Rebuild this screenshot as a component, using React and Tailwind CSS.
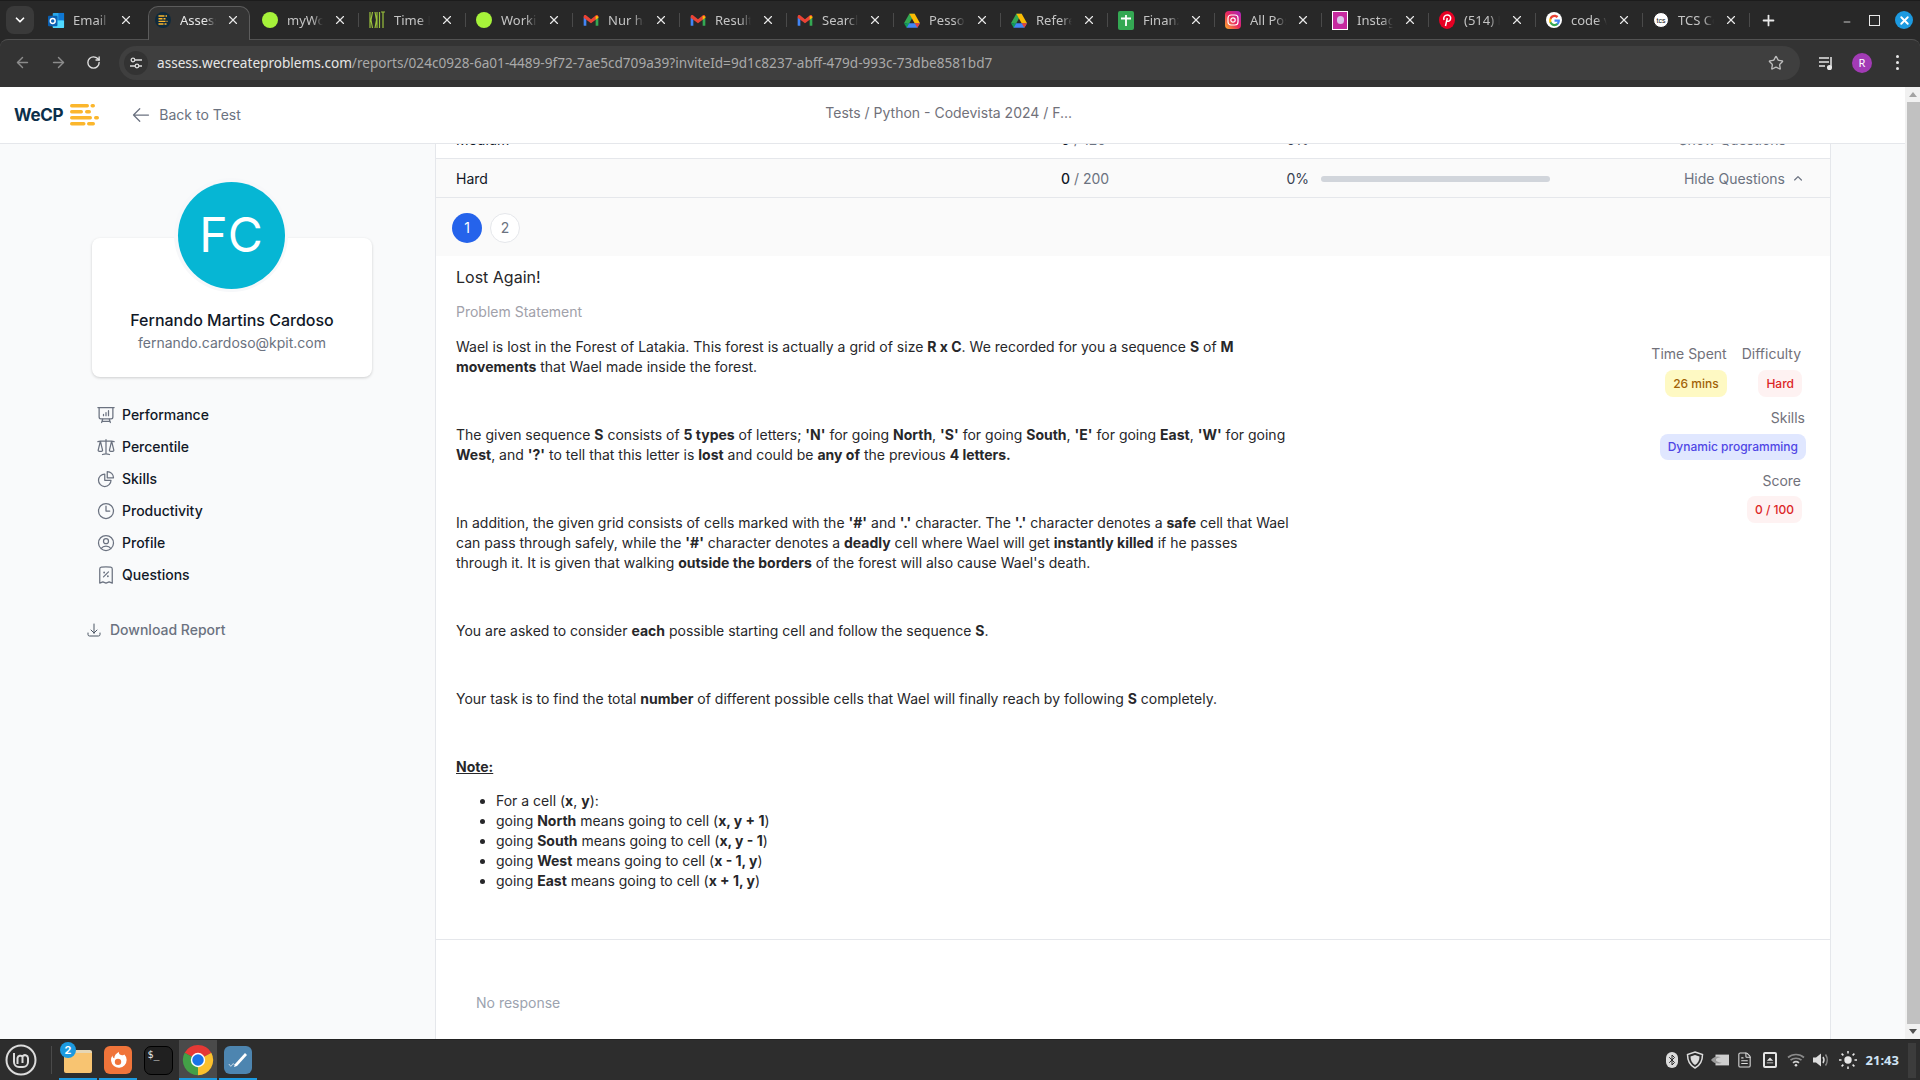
import React from "react";
import { ArrowLeft, ArrowRight, RotateCw, Star, X, Plus, Minus, ChevronDown, Bluetooth, FileText } from "lucide-react";
import { HiOutlinePresentationChartBar, HiOutlineScale, HiOutlineChartPie, HiOutlineClock, HiOutlineUserCircle, HiOutlineReceiptPercent, HiOutlineArrowDownTray, HiOutlineArrowLeft, HiMiniChevronUp } from "react-icons/hi2";

const Gmail = () => (
  <svg viewBox="0 0 24 18" className="w-[16px] h-[13px]">
    <path d="M1 17V4l4 3v10H2a1 1 0 0 1-1-1z" fill="#4285f4" />
    <path d="M23 17V4l-4 3v10h3a1 1 0 0 0 1-1z" fill="#34a853" />
    <path d="M5 8 1 5V3c0-2 2-3 4-1.500L12 7l7-5.500C21 0 23 1 23 3v2l-4 3-7 5z" fill="#ea4335" />
    <path d="M19 2 23 3v2l-4 3z" fill="#fbbc04" />
  </svg>
);
const Drive = () => (
  <svg viewBox="0 0 24 22" className="w-[16px] h-[15px]">
    <path d="M8 1h8l-8 14H0z" fill="#34a853" />
    <path d="M8 1h8l8 14h-8z" fill="#fbbc04" />
    <path d="M4 15h20l-4 7H4z" fill="#4285f4" />
    <path d="M0 15h8l-4 7z" fill="#0f9d58" />
    <path d="M16 15h8l-4 7z" fill="#ea4335" />
  </svg>
);
const Outlook = () => (
  <svg viewBox="0 0 18 18" className="w-[17px] h-[17px]">
    <rect x="5" y="1" width="12" height="16" rx="1" fill="#28a8ea" />
    <rect x="11" y="1" width="6" height="8" fill="#0f78d4" />
    <rect x="5" y="9" width="12" height="8" rx="1" fill="#50d9ff" />
    <rect x="0" y="4" width="10" height="11" rx="1" fill="#0a5fb0" />
    <circle cx="5" cy="9.500" r="2.600" fill="none" stroke="#fff" strokeWidth="1.500" />
  </svg>
);
const WeCPFav = () => (
  <svg viewBox="0 0 16 16" className="w-[16px] h-[16px]">
    <circle cx="8" cy="8" r="8" fill="#0f2a3d" />
    <path d="M3.500 4h6M10.500 4h1.500M3.500 6.700h4M8.500 6.700h2M3.500 9.400h7M11.500 9.400h1M3.500 12h5M9.500 12h2" stroke="#fbb62c" strokeWidth="1.400" />
  </svg>
);
const GreenDot = () => <div className="w-[16px] h-[16px] rounded-full bg-[#a6f23a]" />;
const Kpit = () => (
  <svg viewBox="0 0 16 18" className="w-[16px] h-[18px]">
    <path d="M1 1v16M3.500 1 2 9l1.500 8M6 1l1.500 8L6 17M8 1v16M10.500 1v16M12 1h4M14 1v16" stroke="#9ac23c" strokeWidth="1.200" fill="none" />
  </svg>
);
const Sheets = () => (
  <div className="w-[16px] h-[19px] rounded-[2px] bg-[#34a853] flex items-center justify-center">
    <svg viewBox="0 0 16 19" className="w-[16px] h-[19px]"><path d="M8 4v11M3 7.500h10" stroke="#fff" strokeWidth="1.800" /></svg>
  </div>
);
const Insta = () => (
  <svg viewBox="0 0 16 18" className="w-[16px] h-[18px]">
    <defs>
      <linearGradient id="ig" x1="0" y1="1" x2="1" y2="0">
        <stop offset="0" stopColor="#fdb12a" />
        <stop offset=".5" stopColor="#e8265f" />
        <stop offset="1" stopColor="#a427c4" />
      </linearGradient>
    </defs>
    <rect width="16" height="18" rx="4" fill="url(#ig)" />
    <rect x="3" y="4" width="10" height="10" rx="3" fill="none" stroke="#fff" strokeWidth="1.200" />
    <circle cx="8" cy="9" r="2.200" fill="none" stroke="#fff" strokeWidth="1.200" />
  </svg>
);
const InstaPink = () => (
  <div className="w-[16px] h-[19px] bg-white flex items-center justify-center">
    <div className="w-[14px] h-[17px] bg-[#c62a9f] flex items-center justify-center">
      <div className="w-[7px] h-[8px] rounded-full bg-[#d9c5e8]" />
    </div>
  </div>
);
const Pinterest = () => (
  <svg viewBox="0 0 16 18" className="w-[16px] h-[18px]">
    <ellipse cx="8" cy="9" rx="8" ry="9" fill="#e60023" />
    <path d="M6.500 15 8.300 7M5 9C4 6 6 4 8.300 4c2.400 0 3.700 1.700 3.300 3.900-.4 2-2.600 3.200-3.800 1.800" fill="none" stroke="#fff" strokeWidth="1.500" />
  </svg>
);
const Google = () => (
  <div className="w-[16px] h-[16px] rounded-full bg-white flex items-center justify-center">
    <svg viewBox="0 0 24 24" className="w-[13px] h-[13px]">
      <path d="M22 12.200c0-.7-.1-1.400-.2-2H12v3.900h5.600c-.2 1.300-1 2.400-2.100 3.100v2.600h3.400c2-1.800 3.100-4.500 3.100-7.600z" fill="#4285f4" />
      <path d="M12 22.500c2.800 0 5.200-.9 6.900-2.600l-3.400-2.600c-.9.600-2.100 1-3.500 1-2.700 0-5-1.800-5.800-4.300H3.100v2.700c1.700 3.500 5.100 5.800 8.900 5.800z" fill="#34a853" />
      <path d="M6.200 14c-.4-1.300-.4-2.700 0-4V7.300H3.100c-1.400 2.800-1.400 6.600 0 9.400z" fill="#fbbc04" />
      <path d="M12 5.700c1.500 0 2.900.5 4 1.500l3-3C17.100 2.500 14.700 1.500 12 1.500c-3.800 0-7.200 2.300-8.900 5.800L6.200 10C7 7.500 9.300 5.700 12 5.700z" fill="#ea4335" />
    </svg>
  </div>
);
const Tcs = () => (
  <div className="w-[16px] h-[16px] rounded-full bg-white border border-[#222] flex items-center justify-center text-[#111] text-[7px] leading-none" style={{ fontFamily: "Liberation Sans" }}>tcs</div>
);

const tabs = [
  ["Email - Fer", Outlook],
  ["Assess - W", WeCPFav],
  ["myWork - H", GreenDot],
  ["Time Log", Kpit],
  ["Working", GreenDot],
  ["Nur hab", Gmail],
  ["Resultado", Gmail],
  ["Search res", Gmail],
  ["Pessoal", Drive],
  ["Referenc", Drive],
  ["Finanzas", Sheets],
  ["All Posts", Insta],
  ["Instagram", InstaPink],
  ["(514) Pin", Pinterest],
  ["code vita", Google],
  ["TCS Code", Tcs],
];

function Tab({ label, Icon, index }) {
  const active = index === 1;
  const sep = index >= 2;
  return (
    <div className="relative w-[107px] h-[33px] shrink-0 flex items-center pb-[5px]">
      {active && <div className="absolute left-[3px] right-[2px] top-0 bottom-[-1px] rounded-t-[10px] bg-[#343434] border border-b-0 border-[#5c5c5c]" />}
      <div className="relative w-[36px] flex justify-center shrink-0">
        <Icon />
      </div>
      <div className={`relative w-[36px] -ml-[1px] overflow-hidden whitespace-nowrap text-[13px] leading-[18px] [mask-image:linear-gradient(to_right,black_70%,transparent)] ${active ? "text-[#e6e6e6]" : "text-[#c4c4c4]"}`}>
        {label}
      </div>
      <X className="relative ml-[10px] w-[14px] h-[14px] text-[#e8e8e8] shrink-0" strokeWidth={2} />
      {sep && <div className="absolute right-0 top-[7px] h-[14px] w-px bg-[#4a4a4a]" />}
    </div>
  );
}

const navItems = [
  ["Performance", HiOutlinePresentationChartBar],
  ["Percentile", HiOutlineScale],
  ["Skills", HiOutlineChartPie],
  ["Productivity", HiOutlineClock],
  ["Profile", HiOutlineUserCircle],
  ["Questions", HiOutlineReceiptPercent],
];

function Row({ name, score, pct, action, up, active }) {
  return (
    <div className={`flex items-center h-[39px] pl-5 pr-[24px] pt-[2px] border-b border-[#e5e7eb] text-sm shrink-0 ${active ? "bg-[#fafafa]" : "bg-white"}`}>
      <div className="w-[605px] text-[#111827]">{name}</div>
      <div className="w-[50px] whitespace-nowrap text-[#6b7280]"><span className="font-medium text-[#111827]">{score.split(" / ")[0]}</span> / {score.split(" / ")[1]}</div>
      <div className="w-[198px] text-right text-[#374151]">{pct}</div>
      <div className="ml-3 w-[229px] h-[6px] rounded-full bg-[#d1d5db]" />
      <div className="flex-1 flex justify-end items-center text-[#6b7280]">
        {action}
        {up ? <HiMiniChevronUp className="ml-[5px] w-4 h-4" /> : <span className="w-5" />}
      </div>
    </div>
  );
}

function Badge({ className, children }) {
  return <div className={`h-[27px] px-2 rounded-lg text-xs font-medium flex items-center whitespace-nowrap ${className}`}>{children}</div>;
}

function TaskItem({ children, running, active }) {
  return (
    <div className={`relative w-[38px] h-full shrink-0 flex items-center justify-center ${active ? "bg-[#4a4a4a]" : ""}`}>
      {children}
      {running && <div className="absolute left-0 right-0 bottom-0 h-[2px] bg-[#1c9ae0]" />}
    </div>
  );
}

function Taskbar() {
  return (
    <div className="h-[41px] shrink-0 bg-[#2d2d2d] flex items-center relative border-t border-[#222]">
      <div className="w-[51px] h-full flex items-center pl-[5px] shrink-0">
        <svg viewBox="0 0 32 32" className="w-[32px] h-[32px]" fill="none" stroke="#dcdcdc">
          <circle cx="16" cy="16" r="14.500" strokeWidth="2" />
          <path d="M9 9v9a5 5 0 0 0 5 5h4a5 5 0 0 0 5-5v-4a3 3 0 0 0-5.500-1.500A3 3 0 0 0 12.500 14v6M17.500 13v6" strokeWidth="2" />
        </svg>
      </div>
      <div className="w-px h-[28px] bg-[#4a4a4a] shrink-0" />
      <div className="w-[7px] shrink-0" />
      <TaskItem running>
        <div className="relative w-[28px] h-[23px] mt-[2px] rounded-[2px] bg-[#f8c471] border-t-[3px] border-[#e6d6b4]" />
        <div className="absolute left-[1px] top-[2px] w-[16px] h-[16px] rounded-full bg-[#1c9ae0] text-white text-[11px] font-bold leading-[16px] text-center">2</div>
      </TaskItem>
      <div className="w-[2px] shrink-0" />
      <TaskItem running>
        <div className="w-[28px] h-[28px] rounded-[6px] bg-[#f0743a] flex items-center justify-center">
          <svg viewBox="0 0 24 24" className="w-[22px] h-[22px]" fill="none"><path d="M19 6a8.500 8.500 0 1 1-13 1c0 2 1 3 2 3 0-3 2-5 5-7-.5 2 1 3 2.500 3.500C17 7 18 7 19 6z" fill="#fff" /><circle cx="12" cy="14" r="3.500" fill="#f0743a" /></svg>
        </div>
      </TaskItem>
      <div className="w-[2px] shrink-0" />
      <TaskItem>
        <div className="w-[29px] h-[29px] rounded-[7px] bg-[#202020] border border-black text-[#e8e8e8] text-[10px] leading-none pt-[3px] pl-[3px]" style={{ fontFamily: "DejaVu Sans Mono" }}>$_</div>
      </TaskItem>
      <div className="w-[2px] shrink-0" />
      <TaskItem running active>
        <svg viewBox="0 0 24 24" className="w-[32px] h-[32px]">
          <path d="M12 12 22 6.500A11.500 11.500 0 0 0 2 6.500z" fill="#e53935" />
          <path d="M12 12 2 6.500A11.500 11.500 0 0 0 12 23.500z" fill="#43a047" />
          <path d="M12 12 12 23.500A11.500 11.500 0 0 0 22 6.500z" fill="#fbc02d" />
          <circle cx="12" cy="12" r="5.400" fill="#fff" />
          <circle cx="12" cy="12" r="4.300" fill="#1a73e8" />
        </svg>
      </TaskItem>
      <div className="w-[2px] shrink-0" />
      <TaskItem running>
        <div className="w-[28px] h-[28px] rounded-[6px] bg-[#4d85b0] flex items-center justify-center">
          <svg viewBox="0 0 24 24" className="w-[24px] h-[24px]" fill="none"><path d="M9 16 19 5l2 2-10 11-3 1z" fill="#fff" /><path d="M3 16c1 2 2 3 3 1s2-1 3 0" stroke="#dfeaf2" strokeWidth="1" /></svg>
        </div>
      </TaskItem>
      <div className="flex-1" />
      <div className="flex items-center text-[#dcdcdc] gap-[7px]">
        <div className="w-[12px] h-[16px] rounded-full bg-[#dcdcdc] flex items-center justify-center"><Bluetooth className="w-[12px] h-[12px] text-[#2d2d2d]" strokeWidth={2} /></div>
        <svg viewBox="0 0 18 18" className="ml-[1px] w-[18px] h-[18px]" fill="none"><path d="M9 1 16.500 3.500C16.500 10 14 14.500 9 17 4 14.500 1.500 10 1.500 3.500z" stroke="#dcdcdc" strokeWidth="1.500" /><path d="M9 4 13.500 5.500C13.500 9.500 12 12 9 14 6 12 4.500 9.500 4.500 5.500z" fill="#dcdcdc" /></svg>
        <svg viewBox="0 0 20 14" className="w-[18px] h-[14px]"><rect x="5" y="1" width="15" height="12" fill="#cfcfcf" /><path d="M0 7c3-4 7-5 11-3-3 0-5 1-6 3 2 2 4 3 7 3-4 2-9 1-12-3z" fill="#9a9a9a" /></svg>
        <FileText className="w-[17px] h-[18px]" strokeWidth={1.500} />
        <div className="ml-[3px] w-[14px] h-[16px] rounded-[2px] border-2 border-[#e4e4e4] flex items-center justify-center mr-[3px]">
          <svg viewBox="0 0 10 10" className="w-[8px] h-[8px]"><path d="M1 6 5 2l4 4zM1 8h8v1H1z" fill="#e4e4e4" /></svg>
        </div>
        <svg viewBox="0 0 18 14" className="w-[18px] h-[14px]" fill="none" stroke="#8a8a8a" strokeWidth="1.700"><path d="M1 4.500C5.500 .5 12.500 .5 17 4.500M3.500 7.200c3-2.600 8-2.600 11 0" /><path d="M6 9.800c1.800-1.500 4.200-1.500 6 0" stroke="#cfcfcf" /><circle cx="9" cy="12.300" r="1.300" fill="#dcdcdc" stroke="none" /></svg>
        <svg viewBox="0 0 18 18" className="w-[18px] h-[18px]" fill="none"><path d="M1 6.500h3L9 2.500v13l-5-4H1z" fill="#dcdcdc" /><path d="M11 6c1.200 1.800 1.200 4.200 0 6" stroke="#dcdcdc" strokeWidth="1.500" /><path d="M13.500 3.500c2.200 3.200 2.200 7.800 0 11" stroke="#8a8a8a" strokeWidth="1.500" /></svg>
        <svg viewBox="0 0 18 18" className="ml-[2px] w-[18px] h-[18px]" fill="#e8e8e8" stroke="#e8e8e8" strokeWidth="1.500"><circle cx="9" cy="9" r="3.700" stroke="none" /><path d="M9 0v2.500M9 15.500V18M0 9h2.500M15.500 9H18M2.600 2.600l1.800 1.800M13.600 13.600l1.800 1.800M2.600 15.400l1.800-1.800M13.600 4.400l1.800-1.800" /></svg>
        <div className="ml-[2px] text-[13px] font-bold text-[#cfe3f5] leading-none" style={{ fontFamily: "Noto Sans" }}>21:43</div>
      </div>
      <div className="ml-[9px] mr-[4px] w-[8px] h-[35px] bg-[#3c3c3c]" />
    </div>
  );
}

export default function App() {
  return (
    <div className="w-[1920px] h-[1080px] flex flex-col overflow-hidden bg-[#f9fafb]" style={{ fontFamily: "Inter, sans-serif" }}>
      {/* Browser chrome */}
      <div className="h-[87px] shrink-0 bg-[#282828] flex flex-col" style={{ fontFamily: "'Noto Sans', sans-serif" }}>
        <div className="h-[39px] flex items-end shrink-0 border-t border-[#1c1c1c]">
          <div className="ml-[6px] mb-[5px] w-[28px] h-[28px] rounded-lg bg-[#3a3a3a] flex items-center justify-center">
            <ChevronDown className="w-[14px] h-[14px] text-white" strokeWidth={3} />
          </div>
          <div className="w-[4px]" />
          {tabs.map(([label, Icon], i) => (
            <Tab key={i} index={i} label={label} Icon={Icon} />
          ))}
          <div className="w-[18px] h-[33px] flex items-center justify-center ml-[9px] pb-[5px]">
            <Plus className="w-[17px] h-[17px] text-[#e8e8e8]" strokeWidth={2.500} />
          </div>
          <div className="flex-1" />
          <div className="h-[33px] flex items-center pr-[7px] pb-[5px]">
            <Minus className="w-[10px] h-[10px] text-[#e8e8e8] mt-[4px]" strokeWidth={2} />
            <div className="ml-[17px] w-[11px] h-[11px] border border-[#e8e8e8]" />
            <div className="ml-[15px] w-[18px] h-[18px] rounded-full bg-[#1c9ae0] flex items-center justify-center">
              <X className="w-[13px] h-[13px] text-white" strokeWidth={3.500} />
            </div>
          </div>
        </div>
        <div className="flex-1 bg-[#333333] flex items-center rounded-t-[8px] border-t border-[#525252] pb-[2px]">
          <ArrowLeft className="ml-[14px] w-[17px] h-[17px] text-[#8c8c8c]" strokeWidth={2} />
          <ArrowRight className="ml-[19px] w-[17px] h-[17px] text-[#8c8c8c]" strokeWidth={2} />
          <RotateCw className="ml-[19px] w-[15px] h-[15px] text-[#e0e0e0]" strokeWidth={2.200} />
          <div className="ml-[18px] flex-1 h-[34px] rounded-full bg-[#3f3f3f] flex items-center">
            <div className="ml-[5px] w-[24px] h-[24px] rounded-full bg-[#333] flex items-center justify-center">
              <svg viewBox="0 0 14 14" className="w-[14px] h-[14px]" fill="none" stroke="#dcdcdc" strokeWidth="1.300"><path d="M6 4h7M10 10h3M1 10h5" /><circle cx="4" cy="4" r="1.800" /><circle cx="8" cy="10" r="1.800" /></svg>
            </div>
            <div className="ml-[9px] text-[13.600px] leading-[20px] whitespace-nowrap text-[#a9a9a9]">
              <span className="text-[#e6e6e6]">assess.wecreateproblems.com</span>/reports/024c0928-6a01-4489-9f72-7ae5cd709a39?inviteId=9d1c8237-abff-479d-993c-73dbe8581bd7
            </div>
            <div className="flex-1" />
            <Star className="mr-[16px] w-[16px] h-[16px] text-[#bdbdbd]" strokeWidth={2} />
          </div>
          <svg viewBox="0 0 16 16" className="ml-[18px] w-[16px] h-[16px]" fill="none" stroke="#e8e8e8" strokeWidth="1.500"><path d="M1 3h10M1 7h10M1 11h6" /><path d="M13 2v10" /><circle cx="11.500" cy="12.500" r="1.800" fill="#e8e8e8" /></svg>
          <div className="ml-[18px] w-[20px] h-[20px] rounded-full bg-[#a23bb5] text-white text-[11px] leading-[20px] text-center">R</div>
          <div className="ml-[24px] mr-[21px] flex flex-col gap-[3px]">
            <div className="w-[3px] h-[3px] rounded-full bg-[#e8e8e8]" />
            <div className="w-[3px] h-[3px] rounded-full bg-[#e8e8e8]" />
            <div className="w-[3px] h-[3px] rounded-full bg-[#e8e8e8]" />
          </div>
        </div>
      </div>

      {/* Page */}
      <div className="flex-1 min-h-0 flex">
        <div className="w-[1905px] flex flex-col min-h-0">
          <div className="h-[57px] shrink-0 bg-white border-b border-[#e5e7eb] flex items-center relative z-10">
            <div className="ml-[14px] text-[17px] font-bold text-[#0b2f4a] tracking-[-0.3px] leading-none">WeCP</div>
            <svg viewBox="0 0 29 22" className="ml-[7px] w-[29px] h-[22px]" fill="#fbb62c">
              <rect x="0" y="0" width="19" height="3.500" rx="1.700" />
              <rect x="20.500" y="0" width="4.500" height="3.500" rx="1.700" />
              <rect x="0" y="6" width="13" height="3.500" rx="1.700" />
              <rect x="15" y="6" width="6" height="3.500" rx="1.700" />
              <rect x="0" y="12" width="22" height="3.500" rx="1.700" />
              <rect x="24" y="12" width="5" height="3.500" rx="1.700" />
              <rect x="0" y="18" width="15.500" height="3.500" rx="1.700" />
              <rect x="17" y="18" width="8" height="3.500" rx="1.700" />
            </svg>
            <HiOutlineArrowLeft className="ml-[32px] w-[20px] h-[20px] text-[#6b7280]" />
            <div className="ml-[8px] w-[84px] text-sm text-[#6b7280]">Back to Test</div>
            <div className="ml-[582px] -mt-[4px] text-sm text-[#71717a]">Tests / Python - Codevista 2024 / F...</div>
          </div>
          <div className="flex-1 min-h-0 flex">
            {/* Sidebar */}
            <div className="w-[435px] shrink-0 pl-[92px] pt-[94px]">
              <div className="relative w-[280px] h-[139px] rounded-lg bg-white shadow-[0_1px_3px_rgba(0,0,0,0.18)] pt-[70px] flex flex-col items-center">
                <div className="absolute left-[82px] -top-[60px] w-[114px] h-[114px] rounded-full bg-[#f7f8fa] flex items-center justify-center">
                  <div className="w-[107px] h-[107px] rounded-full bg-[#06b6d4] flex items-center justify-center text-white text-[48px] leading-none">FC</div>
                </div>
                <div className="text-base font-medium leading-6 text-[#111827]">Fernando Martins Cardoso</div>
                <div className="mt-px text-sm leading-5 text-[#6b7280]">fernando.cardoso@kpit.com</div>
              </div>
              <div className="mt-[22px] ml-[4px]">
                {navItems.map(([label, Icon]) => (
                  <div key={label} className="h-8 flex items-center gap-[6px] text-sm font-medium text-[#111827]">
                    <Icon className="w-5 h-5 text-[#6b7280]" />
                    {label}
                  </div>
                ))}
              </div>
              <div className="mt-[29px] -ml-[6px] h-5 flex items-center gap-2 text-sm font-medium text-[#6b7280]">
                <HiOutlineArrowDownTray className="w-4 h-4 text-[#4b5563]" />
                Download Report
              </div>
            </div>

            {/* Main */}
            <div className="w-[1396px] shrink-0 bg-white border-x border-[#e5e7eb] flex flex-col overflow-hidden">
              <div className="-mt-[24px] shrink-0">
                <Row name="Medium" score="0 / 120" pct="0%" action="Show Questions" />
              </div>
              <Row name="Hard" score="0 / 200" pct="0%" action="Hide Questions" up active />
              <div className="h-[58px] shrink-0 bg-[#fafafa] pl-4 pt-[2px] flex items-center gap-2">
                <div className="w-[30px] h-[30px] rounded-full bg-[#2563eb] text-white text-sm flex items-center justify-center">1</div>
                <div className="w-[30px] h-[30px] rounded-full bg-white border border-[#e5e7eb] text-[#6b7280] text-sm flex items-center justify-center">2</div>
              </div>
              <div className="pl-5 pt-[9px] shrink-0">
                <div className="text-base leading-6 text-[#27272a]">Lost Again!</div>
                <div className="mt-[13px] text-sm leading-5 text-[#a1a1aa]">Problem Statement</div>
              </div>
              <div className="flex pl-5 mt-[15px] shrink-0">
                <div className="w-[835px] shrink-0 text-sm leading-5 text-[#27272a]">
                  <p>Wael is lost in the Forest of Latakia. This forest is actually a grid of size <b>R x C</b>. We recorded for you a sequence <b>S</b> of <b>M movements</b> that Wael made inside the forest.</p>
                  <p className="mt-12">The given sequence <b>S</b> consists of <b>5 types</b> of letters; <b>'N'</b> for going <b>North</b>, <b>'S'</b> for going <b>South</b>, <b>'E'</b> for going <b>East</b>, <b>'W'</b> for going <b>West</b>, and <b>'?'</b> to tell that this letter is <b>lost</b> and could be <b>any of</b> the previous <b>4 letters.</b></p>
                  <p className="mt-12">In addition, the given grid consists of cells marked with the <b>'#'</b> and <b>'.'</b> character. The <b>'.'</b> character denotes a <b>safe</b> cell that Wael can pass through safely, while the <b>'#'</b> character denotes a <b>deadly</b> cell where Wael will get <b>instantly killed</b> if he passes through it. It is given that walking <b>outside the borders</b> of the forest will also cause Wael's death.</p>
                  <p className="mt-12">You are asked to consider <b>each</b> possible starting cell and follow the sequence <b>S</b>.</p>
                  <p className="mt-12">Your task is to find the total <b>number</b> of different possible cells that Wael will finally reach by following <b>S</b> completely.</p>
                  <p className="mt-12"><b className="underline">Note:</b></p>
                  <ul className="mt-[14px] pl-10 list-disc">
                    <li>For a cell (<b>x</b>, <b>y</b>):</li>
                    <li>going <b>North</b> means going to cell (<b>x, y + 1</b>)</li>
                    <li>going <b>South</b> means going to cell (<b>x, y - 1</b>)</li>
                    <li>going <b>West</b> means going to cell (<b>x - 1, y</b>)</li>
                    <li>going <b>East</b> means going to cell (<b>x + 1, y</b>)</li>
                  </ul>
                </div>
                <div className="flex-1 pr-6 pt-[7px] flex flex-col items-end text-sm text-[#71717a]">
                  <div className="flex gap-[15px] mr-[4px]">
                    <div className="flex flex-col items-end">
                      <div className="leading-5">Time Spent</div>
                      <Badge className="mt-[6px] bg-[#fef9c3] text-[#a16207]">26 mins</Badge>
                    </div>
                    <div className="flex flex-col items-end">
                      <div className="leading-5 mr-px">Difficulty</div>
                      <Badge className="mt-[6px] bg-[#fef2f2] text-[#dc2626]">Hard</Badge>
                    </div>
                  </div>
                  <div className="mt-[11px] mr-px leading-5">Skills</div>
                  <Badge className="mt-[6px] !h-[26px] bg-[#e0e7ff] text-[#4f46e5]">Dynamic programming</Badge>
                  <div className="mt-[11px] mr-[5px] leading-5">Score</div>
                  <Badge className="mt-[5px] mr-[4px] bg-[#fef2f2] text-[#dc2626]">0 / 100</Badge>
                </div>
              </div>
              <div className="mt-[48px] border-t border-[#e5e7eb] pl-10 pt-[53px] text-sm leading-5 text-[#9ca3af] shrink-0">No response</div>
            </div>
          </div>
        </div>
        {/* Scrollbar */}
        <div className="w-[15px] bg-[#f1f1f1] flex flex-col items-center">
          <div className="h-[15px] flex items-center justify-center shrink-0">
            <div className="w-0 h-0 border-x-[4px] border-x-transparent border-b-[5px] border-b-[#a3a3a3]" />
          </div>
          <div className="w-[13px] ml-[2px] h-[922px] bg-[#c1c1c1] shrink-0" />
          <div className="flex-1 flex items-center justify-center">
            <div className="w-0 h-0 border-x-[4px] border-x-transparent border-t-[5px] border-t-[#505050]" />
          </div>
        </div>
      </div>

      <Taskbar />
    </div>
  );
}
